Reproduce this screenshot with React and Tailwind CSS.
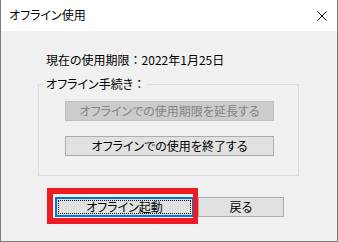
const font = "font-['Noto_Sans_CJK_JP','Noto_Sans',sans-serif] [font-feature-settings:'palt']";

const App = () => {
  return (
    <div className={`relative w-[338px] h-[242px] flex flex-col border-l border-r border-b border-[#7a7a7a] text-[12px] text-black ${font}`}>
      <div className="h-[31px] bg-white flex items-center justify-between pl-[8px] pr-[10px]">
        <span className="leading-[16px] -mt-[1px]">オフライン使用</span>
        <svg width="10" height="10" viewBox="0 0 10 10">
          <path d="M0.5 0.5 L9.5 9.5 M9.5 0.5 L0.5 9.5" stroke="#000" strokeWidth="1" fill="none" />
        </svg>
      </div>

      <div className="flex-1 bg-[#f0f0f0] flex flex-col">
        <div className="mt-[21px] ml-[45px] h-[16px] leading-[16px]">
          現在の使用期限<span className="[font-feature-settings:normal]">：</span>2022年1月25日
        </div>

        <fieldset className="mt-[8px] ml-[37px] w-[261px] border border-[#dcdcdc] p-0">
          <legend className="ml-[5px] px-[2px] leading-[16px]">
            オフライン手続き<span className="[font-feature-settings:normal]">：</span>
          </legend>
          <div className="pl-[26px] pt-[9px] pb-[19px] flex flex-col gap-[15px]">
            <button
              disabled
              className="w-[209px] h-[20px] bg-[#cccccc] border border-[#bfbfbf] text-[#838383] leading-[16px] flex items-center justify-center"
            >
              オフラインでの使用期限を延長する
            </button>
            <button className="w-[209px] h-[20px] bg-[#e1e1e1] border border-[#adadad] leading-[16px] flex items-center justify-center">
              オフラインでの使用を終了する
            </button>
          </div>
        </fieldset>

        <div className="mt-[21px] ml-[54px] flex gap-[4px]">
          <button className="w-[139px] h-[20px] bg-[#e1e1e1] border-2 border-[#0078d7] p-[1px]">
            <div className="w-full h-full border border-dotted border-black flex items-center justify-center leading-[14px]">
              オフライン起動
            </div>
          </button>
          <button className="w-[86px] h-[20px] bg-[#e1e1e1] border border-[#adadad] leading-[16px] flex items-center justify-center">
            戻る
          </button>
        </div>
      </div>

      <div className="absolute left-[46px] top-[188px] w-[151px] h-[36px] border-[#ed1c24] border-t-[6px] border-l-[6px] border-b-[6px] border-r-[5px] pointer-events-none" />
    </div>
  );
};

export default App;
